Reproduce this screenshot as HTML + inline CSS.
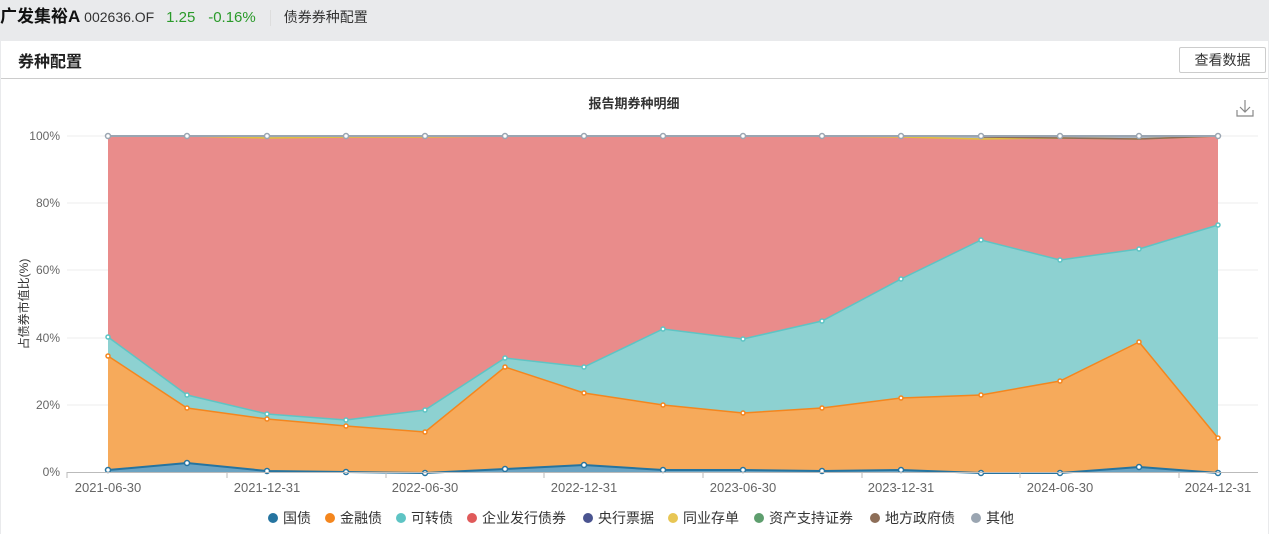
<!DOCTYPE html>
<html><head><meta charset="utf-8"><style>
body{margin:0;width:1269px;height:534px;background:#e9eaec;font-family:"Liberation Sans","Noto Sans CJK SC",sans-serif;overflow:hidden;position:relative}
.top{position:absolute;left:0;top:0;height:36px;line-height:34px;font-size:14px;color:#333;white-space:nowrap}
.card{position:absolute;left:1px;top:41px;width:1267px;height:493px;background:#fff}
.hd{height:37px;border-bottom:1px solid #ccc;position:relative}
.hd b{position:absolute;left:17px;top:7px;font-size:16px;color:#222}
.btn{position:absolute;right:2px;top:6px;width:85px;height:24px;border:1px solid #ccc;border-radius:2px;font-size:14px;line-height:24px;text-align:center;color:#333}
</style></head><body>
<div class="top"><b style="font-size:17px;color:#111">广发集裕A</b> 002636.OF <span style="color:#2a9a2a;font-size:15px;margin-left:8px">1.25</span> <span style="color:#2a9a2a;font-size:15px;margin-left:9px">-0.16%</span><span style="display:inline-block;width:1px;height:16px;background:#ddd;margin:0 13px 0 14px;vertical-align:middle"></span>债券券种配置</div>
<div class="card"><div class="hd"><b>券种配置</b><div class="btn">查看数据</div></div></div>
<svg width="1269" height="534" style="position:absolute;left:0;top:0" font-family="Liberation Sans,Noto Sans CJK SC,sans-serif">
<text x="634" y="108" font-size="13" font-weight="bold" text-anchor="middle" fill="#333">报告期券种明细</text>
<path d="M1245 100v12M1240 107l5 5 5-5M1237 110v6h16v-6" fill="none" stroke="#888" stroke-width="1.2"/>
<g stroke="#eee"><line x1="67" x2="1258" y1="136" y2="136"/><line x1="67" x2="1258" y1="203" y2="203"/><line x1="67" x2="1258" y1="270" y2="270"/><line x1="67" x2="1258" y1="338" y2="338"/><line x1="67" x2="1258" y1="405" y2="405"/></g>
<g font-size="12" fill="#666" text-anchor="end"><text x="60" y="140">100%</text><text x="60" y="207">80%</text><text x="60" y="274">60%</text><text x="60" y="342">40%</text><text x="60" y="409">20%</text><text x="60" y="476">0%</text></g>
<text transform="translate(28,304) rotate(-90)" font-size="12" fill="#333" text-anchor="middle">占债券市值比(%)</text>
<polygon fill="#aab3bd" points="108,136 187,136 267,136 346,136 425,136 505,136 584,136 663,136 743,136 822,136 901,136 981,136 1060,136 1139,136 1218,136 1218,140 108,140"/>
<polygon fill="#e98c8b" points="108,136 187,136 267,138 346,137 425,137 505,136 584,136 663,136 743,136 822,136 901,137 981,139 1060,138 1139,139 1218,136 1218,472 108,472"/>
<polyline fill="none" stroke="#e0c040" stroke-width="1.5" points="108,136 187,136 267,138 346,137 425,137 505,136 584,136 663,136 743,136 822,136 901,137 981,139 1060,138 1139,139 1218,136"/>
<polyline fill="none" stroke="#8d6e58" stroke-width="1.5" points="981,137 1060,138 1139,139 1218,136"/>
<polygon fill="#8dd1d1" points="108,337 187,395 267,414 346,420 425,410 505,358 584,367 663,329 743,339 822,321 901,279 981,240 1060,260 1139,249 1218,225 1218,472 108,472"/>
<polygon fill="#f6aa5b" points="108,356 187,408 267,419 346,426 425,432 505,367 584,393 663,405 743,413 822,408 901,398 981,395 1060,381 1139,342 1218,438 1218,472 108,472"/>
<polygon fill="#6ba3c2" points="108,470 187,463 267,471 346,472 425,473 505,469 584,465 663,470 743,470 822,471 901,470 981,473 1060,473 1139,467 1218,473 1218,472 108,472"/>
<polyline fill="none" stroke="#9aa5b1" stroke-width="2" points="108,136 187,136 267,136 346,136 425,136 505,136 584,136 663,136 743,136 822,136 901,136 981,136 1060,136 1139,136 1218,136"/>
<polyline fill="none" stroke="#5ec4c4" stroke-width="1.5" points="108,337 187,395 267,414 346,420 425,410 505,358 584,367 663,329 743,339 822,321 901,279 981,240 1060,260 1139,249 1218,225"/>
<polyline fill="none" stroke="#f4861e" stroke-width="1.5" points="108,356 187,408 267,419 346,426 425,432 505,367 584,393 663,405 743,413 822,408 901,398 981,395 1060,381 1139,342 1218,438"/>
<polyline fill="none" stroke="#2574a0" stroke-width="2" points="108,470 187,463 267,471 346,472 425,473 505,469 584,465 663,470 743,470 822,471 901,470 981,473 1060,473 1139,467 1218,473"/>
<g fill="#fff" stroke-width="1.5">
<g stroke="#9aa5b1"><circle cx="108" cy="136" r="2.5"/><circle cx="187" cy="136" r="2.5"/><circle cx="267" cy="136" r="2.5"/><circle cx="346" cy="136" r="2.5"/><circle cx="425" cy="136" r="2.5"/><circle cx="505" cy="136" r="2.5"/><circle cx="584" cy="136" r="2.5"/><circle cx="663" cy="136" r="2.5"/><circle cx="743" cy="136" r="2.5"/><circle cx="822" cy="136" r="2.5"/><circle cx="901" cy="136" r="2.5"/><circle cx="981" cy="136" r="2.5"/><circle cx="1060" cy="136" r="2.5"/><circle cx="1139" cy="136" r="2.5"/><circle cx="1218" cy="136" r="2.5"/></g>
<g stroke="#5ec4c4"><circle cx="108" cy="337" r="2"/><circle cx="187" cy="395" r="2"/><circle cx="267" cy="414" r="2"/><circle cx="346" cy="420" r="2"/><circle cx="425" cy="410" r="2"/><circle cx="505" cy="358" r="2"/><circle cx="584" cy="367" r="2"/><circle cx="663" cy="329" r="2"/><circle cx="743" cy="339" r="2"/><circle cx="822" cy="321" r="2"/><circle cx="901" cy="279" r="2"/><circle cx="981" cy="240" r="2"/><circle cx="1060" cy="260" r="2"/><circle cx="1139" cy="249" r="2"/><circle cx="1218" cy="225" r="2"/></g>
<g stroke="#f4861e"><circle cx="108" cy="356" r="2"/><circle cx="187" cy="408" r="2"/><circle cx="267" cy="419" r="2"/><circle cx="346" cy="426" r="2"/><circle cx="425" cy="432" r="2"/><circle cx="505" cy="367" r="2"/><circle cx="584" cy="393" r="2"/><circle cx="663" cy="405" r="2"/><circle cx="743" cy="413" r="2"/><circle cx="822" cy="408" r="2"/><circle cx="901" cy="398" r="2"/><circle cx="981" cy="395" r="2"/><circle cx="1060" cy="381" r="2"/><circle cx="1139" cy="342" r="2"/><circle cx="1218" cy="438" r="2"/></g>
<g stroke="#2574a0"><circle cx="108" cy="470" r="2.5"/><circle cx="187" cy="463" r="2.5"/><circle cx="267" cy="471" r="2.5"/><circle cx="346" cy="472" r="2.5"/><circle cx="425" cy="473" r="2.5"/><circle cx="505" cy="469" r="2.5"/><circle cx="584" cy="465" r="2.5"/><circle cx="663" cy="470" r="2.5"/><circle cx="743" cy="470" r="2.5"/><circle cx="822" cy="471" r="2.5"/><circle cx="901" cy="470" r="2.5"/><circle cx="981" cy="473" r="2.5"/><circle cx="1060" cy="473" r="2.5"/><circle cx="1139" cy="467" r="2.5"/><circle cx="1218" cy="473" r="2.5"/></g>
</g>
<line x1="67" x2="1258" y1="472.5" y2="472.5" stroke="#bbb"/>
<g stroke="#bbb"><line x1="67" x2="67" y1="472" y2="478"/><line x1="227" x2="227" y1="472" y2="478"/><line x1="386" x2="386" y1="472" y2="478"/><line x1="544" x2="544" y1="472" y2="478"/><line x1="703" x2="703" y1="472" y2="478"/><line x1="862" x2="862" y1="472" y2="478"/><line x1="1020" x2="1020" y1="472" y2="478"/><line x1="1179" x2="1179" y1="472" y2="478"/></g>
<g font-size="13" fill="#666" text-anchor="middle"><text x="108" y="492">2021-06-30</text><text x="267" y="492">2021-12-31</text><text x="425" y="492">2022-06-30</text><text x="584" y="492">2022-12-31</text><text x="743" y="492">2023-06-30</text><text x="901" y="492">2023-12-31</text><text x="1060" y="492">2024-06-30</text><text x="1218" y="492">2024-12-31</text></g>
<g font-size="14" fill="#333">
<circle cx="273" cy="518" r="5" fill="#2574a0"/><text x="283" y="523">国债</text>
<circle cx="330" cy="518" r="5" fill="#f4861e"/><text x="340" y="523">金融债</text>
<circle cx="401" cy="518" r="5" fill="#5ec4c4"/><text x="411" y="523">可转债</text>
<circle cx="472" cy="518" r="5" fill="#e05a5a"/><text x="482" y="523">企业发行债券</text>
<circle cx="588" cy="518" r="5" fill="#4a5490"/><text x="598" y="523">央行票据</text>
<circle cx="673" cy="518" r="5" fill="#e8c654"/><text x="683" y="523">同业存单</text>
<circle cx="759" cy="518" r="5" fill="#5e9e6e"/><text x="769" y="523">资产支持证券</text>
<circle cx="875" cy="518" r="5" fill="#8d6e58"/><text x="885" y="523">地方政府债</text>
<circle cx="976" cy="518" r="5" fill="#9aa5b1"/><text x="986" y="523">其他</text>
</g>
</svg>
</body></html>
